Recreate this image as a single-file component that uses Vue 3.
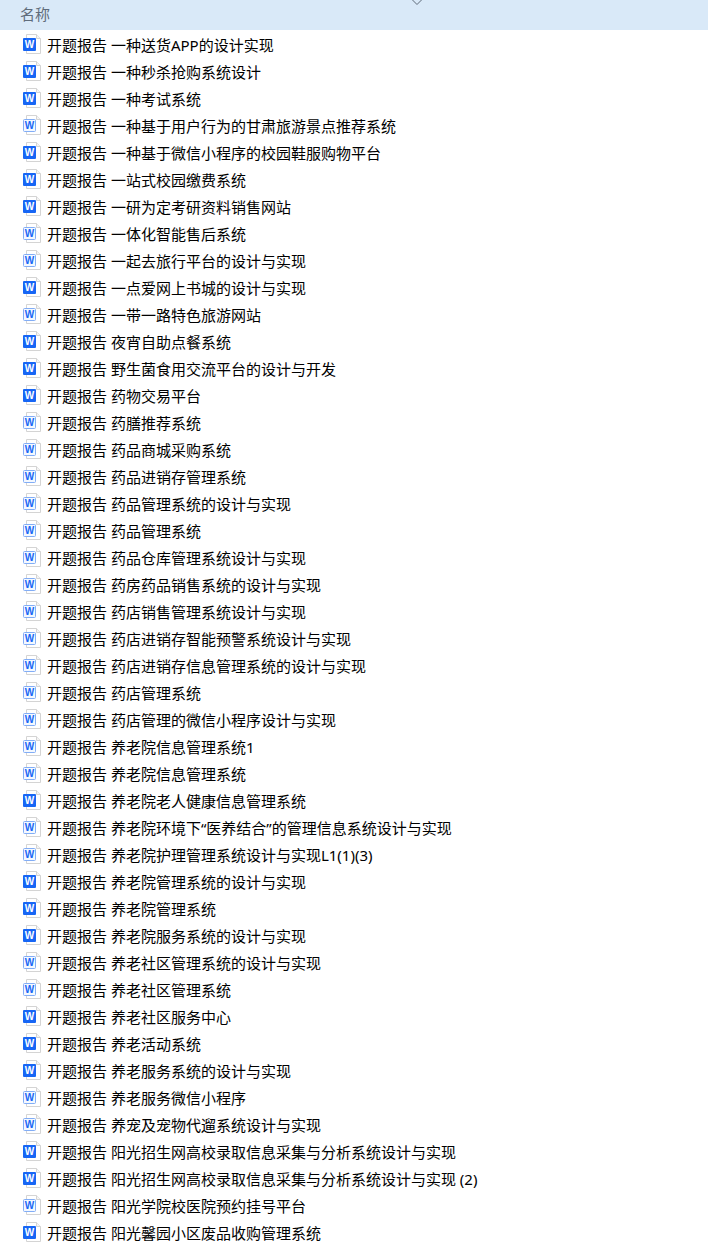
<script setup>
const rows = [
  ['一种送货APP的设计实现', 1], ['一种秒杀抢购系统设计', 1], ['一种考试系统', 1],
  ['一种基于用户行为的甘肃旅游景点推荐系统', 0], ['一种基于微信小程序的校园鞋服购物平台', 1],
  ['一站式校园缴费系统', 1], ['一研为定考研资料销售网站', 1], ['一体化智能售后系统', 0],
  ['一起去旅行平台的设计与实现', 0], ['一点爱网上书城的设计与实现', 1], ['一带一路特色旅游网站', 0],
  ['夜宵自助点餐系统', 1], ['野生菌食用交流平台的设计与开发', 1], ['药物交易平台', 1],
  ['药膳推荐系统', 0], ['药品商城采购系统', 0], ['药品进销存管理系统', 0],
  ['药品管理系统的设计与实现', 0], ['药品管理系统', 0], ['药品仓库管理系统设计与实现', 0],
  ['药房药品销售系统的设计与实现', 0], ['药店销售管理系统设计与实现', 0],
  ['药店进销存智能预警系统设计与实现', 0], ['药店进销存信息管理系统的设计与实现', 0],
  ['药店管理系统', 0], ['药店管理的微信小程序设计与实现', 0], ['养老院信息管理系统1', 0],
  ['养老院信息管理系统', 0], ['养老院老人健康信息管理系统', 1],
  ['养老院环境下“医养结合”的管理信息系统设计与实现', 0], ['养老院护理管理系统设计与实现L1(1)(3)', 0],
  ['养老院管理系统的设计与实现', 1], ['养老院管理系统', 1], ['养老院服务系统的设计与实现', 1],
  ['养老社区管理系统的设计与实现', 0], ['养老社区管理系统', 0], ['养老社区服务中心', 1],
  ['养老活动系统', 1], ['养老服务系统的设计与实现', 1], ['养老服务微信小程序', 0],
  ['养宠及宠物代遛系统设计与实现', 0], ['阳光招生网高校录取信息采集与分析系统设计与实现', 1],
  ['阳光招生网高校录取信息采集与分析系统设计与实现 (2)', 1], ['阳光学院校医院预约挂号平台', 0],
  ['阳光馨园小区废品收购管理系统', 1],
]
</script>

<template>
  <div class="explorer">
    <header class="head">
      <span class="head-label">名称</span>
      <svg class="chevron" width="10" height="5" viewBox="0 0 10 5">
        <path d="M0.5 0 L5 4.5 L9.5 0" fill="none" stroke="#5f6b78" stroke-width="1" />
      </svg>
    </header>
    <ul class="list">
      <li v-for="(row, i) in rows" :key="i" class="row">
        <svg class="icon" width="20" height="23" viewBox="0 0 20 23">
          <path d="M5.5 0.5 H15.5 L19.5 4.5 V19.5 H5.5 Z" fill="#fff" stroke="#d4d4d4" />
          <path d="M15.5 0.5 V4.5 H19.5" fill="#f4f4f4" stroke="#d4d4d4" />
          <template v-if="row[1]">
            <rect x="2" y="4" width="13" height="13" rx="1" fill="#1766f5" />
            <text class="w w-solid" x="8.5" y="14" text-anchor="middle">W</text>
          </template>
          <template v-else>
            <rect x="2.5" y="4.5" width="12" height="12" rx="1" fill="#f3f8ff" stroke="#82adf6" />
            <text class="w w-line" x="8.5" y="14" text-anchor="middle">W</text>
          </template>
        </svg>
        <span class="name">开题报告 {{ row[0] }}</span>
      </li>
    </ul>
  </div>
</template>

<style scoped>
.explorer {
  width: 708px;
  height: 1248px;
  overflow: hidden;
  background: #fff;
  font-family: "Noto Sans", "Noto Sans CJK SC", sans-serif;
}
.head {
  position: relative;
  height: 30px;
  display: flex;
  align-items: flex-start;
  padding-left: 20px;
  background: #d9e9f8;
}
.head-label {
  font-size: 15px;
  line-height: 29px;
  color: #5f6c7b;
}
.chevron {
  position: absolute;
  left: 412px;
  top: 0;
}
.list {
  list-style: none;
  margin: 0;
  padding: 2px 0 0 21px;
}
.row {
  height: 27px;
  display: flex;
  align-items: center;
  gap: 6px;
}
.icon {
  flex: none;
}
.w {
  font-family: "Liberation Sans", sans-serif;
  font-size: 10px;
  font-weight: 700;
}
.w-solid {
  fill: #fff;
}
.w-line {
  fill: #1766f5;
}
.name {
  font-size: 15px;
  line-height: 27px;
  color: #000;
  white-space: nowrap;
}
</style>
